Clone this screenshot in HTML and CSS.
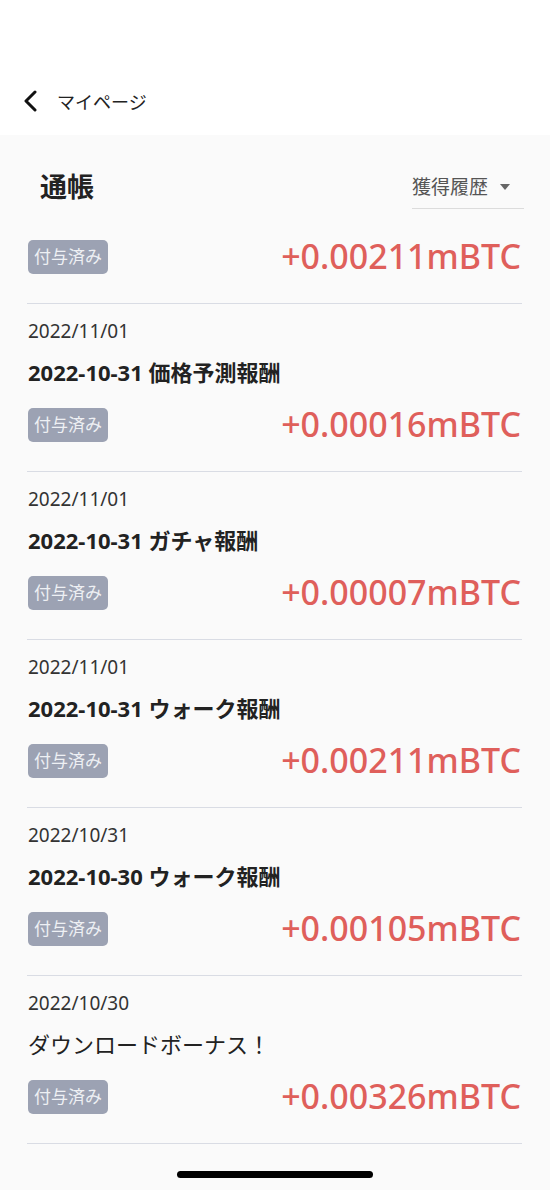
FILE: index.html
```html
<!DOCTYPE html>
<html>
<head>
  <title>通帳</title>
  <meta name="viewport" content="width=device-width, initial-scale=1">
  <link rel="stylesheet" href="styles.css">
</head>
<body>
  <!-- ヘッダー -->
  <div class="topbar">
    <svg class="back" width="16" height="22" viewBox="0 0 16 22">
      <path d="M13 2 L4 11 L13 20" fill="none" stroke="#111" stroke-width="3" stroke-linecap="round" stroke-linejoin="round"/>
    </svg>
    <span class="topbar-title">マイページ</span>
  </div>

  <div class="page">
    <div class="book-head">
      <div class="book-title">通帳</div>
      <div class="select">
        <span>獲得履歴</span>
        <span class="caret"></span>
      </div>
    </div>

    <div class="list">
      <div class="row first">
        <div class="row-foot">
          <span class="badge">付与済み</span>
          <span class="amount">+0.00211mBTC</span>
        </div>
      </div>
      <div class="row">
        <div class="date">2022/11/01</div>
        <div class="name">2022-10-31 価格予測報酬</div>
        <div class="row-foot">
          <span class="badge">付与済み</span>
          <span class="amount">+0.00016mBTC</span>
        </div>
      </div>
      <div class="row">
        <div class="date">2022/11/01</div>
        <div class="name">2022-10-31 ガチャ報酬</div>
        <div class="row-foot">
          <span class="badge">付与済み</span>
          <span class="amount">+0.00007mBTC</span>
        </div>
      </div>
      <div class="row">
        <div class="date">2022/11/01</div>
        <div class="name">2022-10-31 ウォーク報酬</div>
        <div class="row-foot">
          <span class="badge">付与済み</span>
          <span class="amount">+0.00211mBTC</span>
        </div>
      </div>
      <div class="row">
        <div class="date">2022/10/31</div>
        <div class="name">2022-10-30 ウォーク報酬</div>
        <div class="row-foot">
          <span class="badge">付与済み</span>
          <span class="amount">+0.00105mBTC</span>
        </div>
      </div>
      <div class="row">
        <div class="date">2022/10/30</div>
        <div class="name plain">ダウンロードボーナス！</div>
        <div class="row-foot">
          <span class="badge">付与済み</span>
          <span class="amount">+0.00326mBTC</span>
        </div>
      </div>
    </div>

    <div class="home-bar"></div>
  </div>
</body>
</html>
```

FILE: styles.css
```css
/* 全体 */
body {
  margin: 0;
  font-family: "Noto Sans", "Noto Sans CJK JP", sans-serif;
  color: #222;
  background: #fafafa;
}

/* ヘッダー */
.topbar {
  height: 135px;
  background: #fff;
  display: flex;
  align-items: center;
  padding: 66px 0 0 22px;
  box-sizing: border-box;
}

.back {
  display: block;
}

.topbar-title {
  margin-left: 19px;
  font-size: 18px;
  color: #222;
}

.page {
  background: #fafafa;
  min-height: 1055px;
  display: flex;
  flex-direction: column;
}

/* 通帳タイトルとセレクト */
.book-head {
  display: flex;
  justify-content: space-between;
  align-items: flex-start;
  padding: 34px 26px 0 40px;
}

.book-title {
  font-size: 27px;
  font-weight: bold;
  line-height: 36px;
}

.select {
  display: flex;
  align-items: center;
  width: 112px;
  margin-top: 5px;
  padding-bottom: 8px;
  border-bottom: 1px solid #dcdcdc;
  font-size: 19px;
  line-height: 26px;
  color: #555;
}

.caret {
  margin-left: 12px;
  width: 0;
  height: 0;
  border-left: 5px solid transparent;
  border-right: 5px solid transparent;
  border-top: 6px solid #666;
}

/* 履歴リスト */
.list {
  padding: 0 28px 0 27px;
}

.row {
  padding: 15px 0 29px 1px;
  border-bottom: 1px solid #d9dce4;
}

.row.first {
  padding-top: 30px;
}

.date {
  font-size: 19px;
  line-height: 24px;
  color: #333;
}

.name {
  margin-top: 15px;
  font-size: 22px;
  line-height: 28px;
  font-weight: bold;
}

.name.plain {
  font-weight: normal;
}

.row-foot {
  margin-top: 21px;
  display: flex;
  justify-content: space-between;
  align-items: center;
  height: 35px;
}

.row.first .row-foot {
  margin-top: 0;
}

.badge {
  background: #9ca2b3;
  color: #eef0f4;
  font-size: 17px;
  line-height: 34px;
  padding: 0 6px;
  border-radius: 5px;
}

.amount {
  font-size: 34px;
  font-weight: 500;
  color: #df5f5b;
  line-height: 35px;
  margin-right: 1px;
}

/* ホームインジケーター */
.home-bar {
  width: 196px;
  height: 7px;
  border-radius: 4px;
  background: #000;
  margin: auto auto 12px;
}
```
